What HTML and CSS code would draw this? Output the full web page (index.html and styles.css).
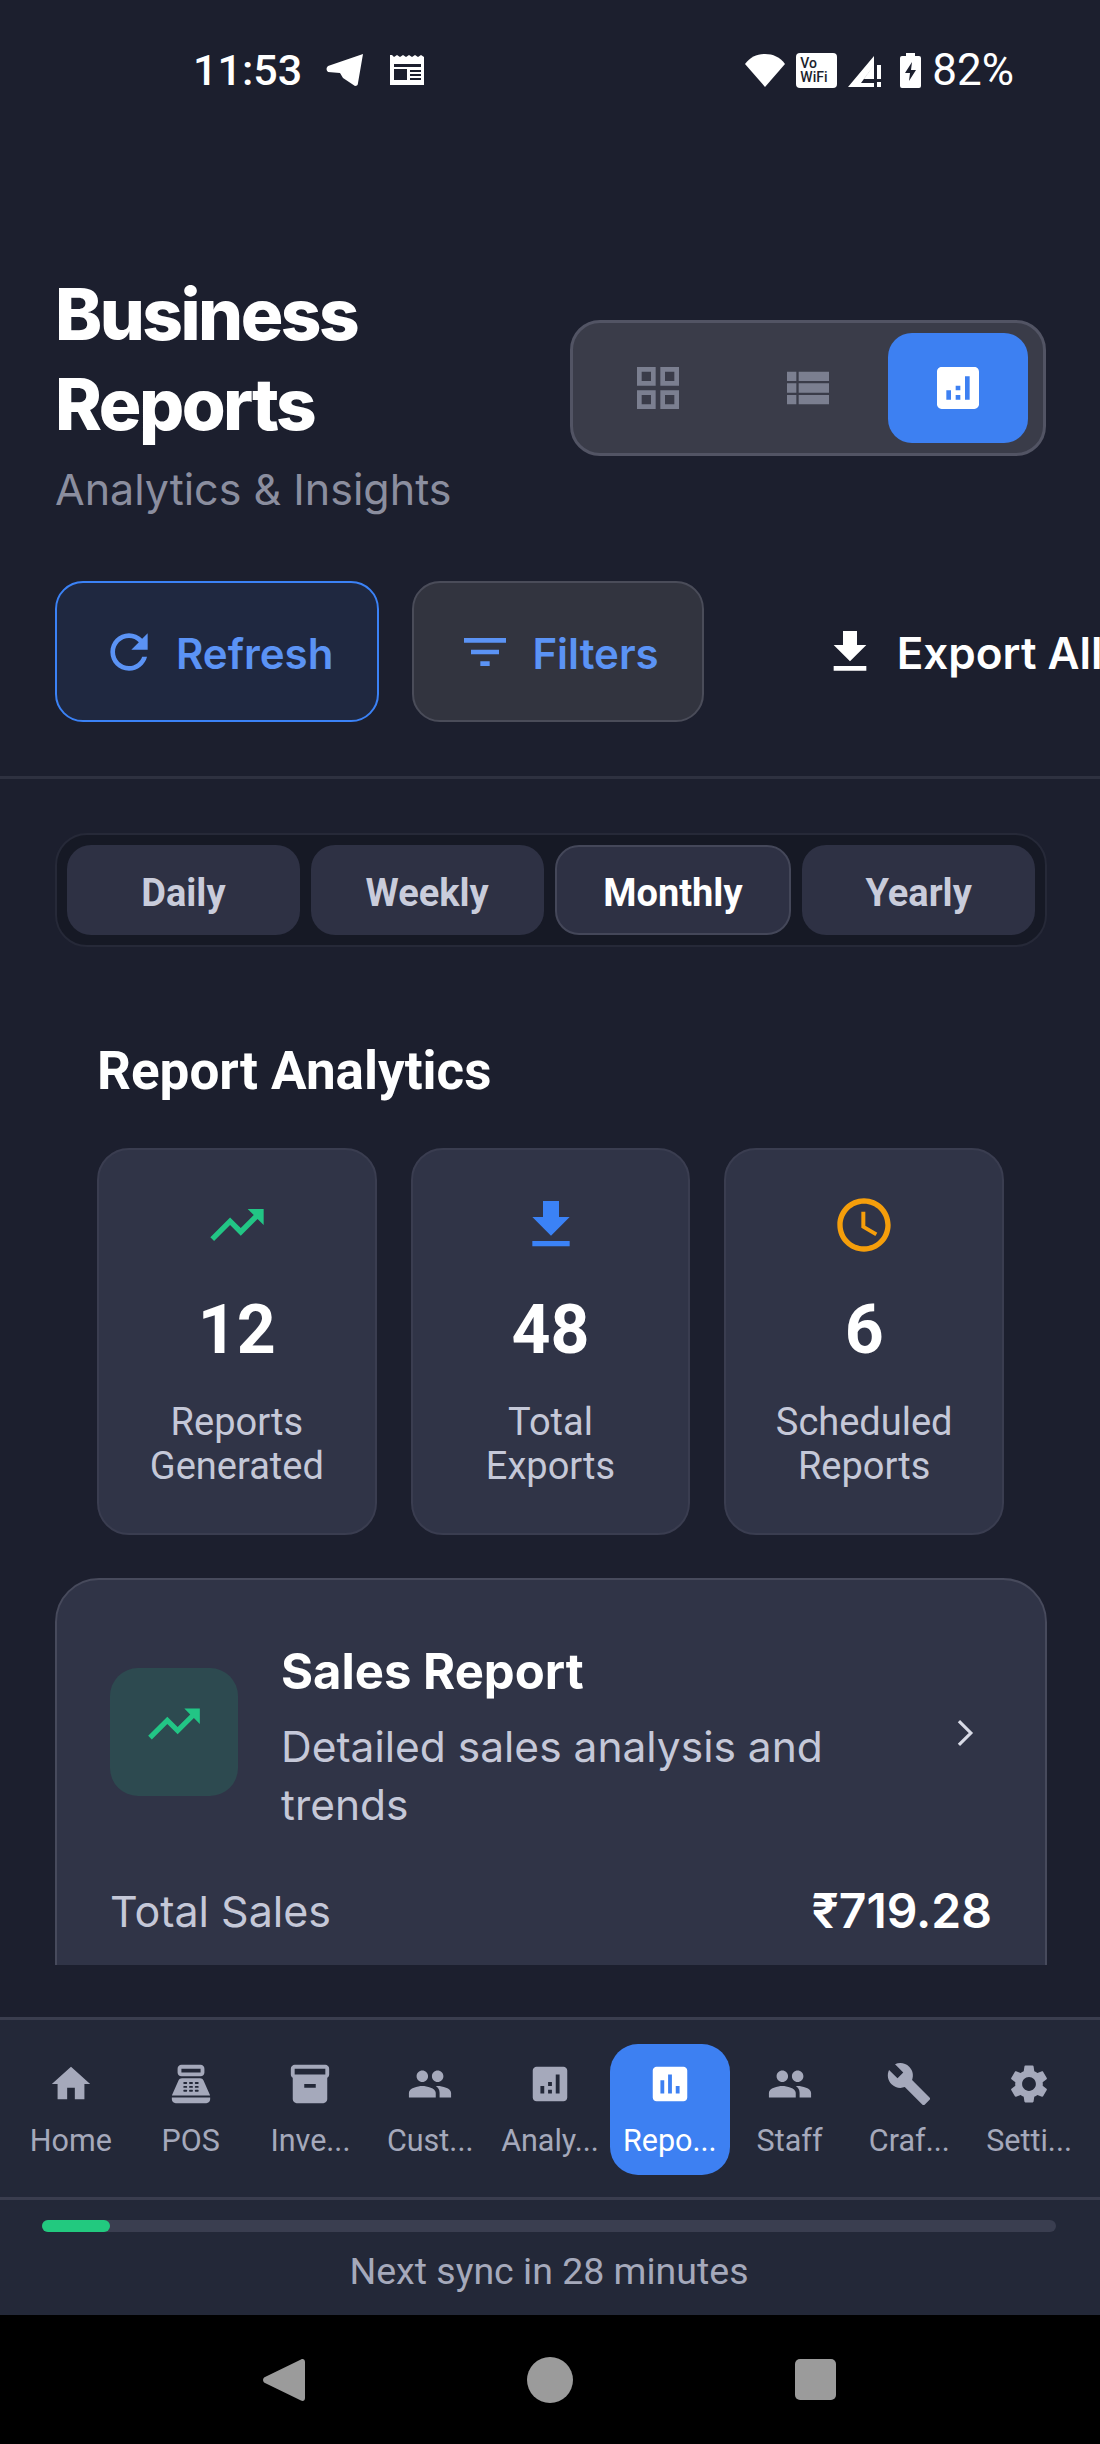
FILE: index.html
```html
<!DOCTYPE html>
<html lang="en">
<head>
    <meta charset="UTF-8">
    <meta name="viewport" content="width=device-width, initial-scale=1.0">
    <title>Business Reports</title>
    <link rel="stylesheet" href="styles.css">
</head>
<body>
    <div class="status-bar">
        <span class="clock">11:53</span>
        <svg class="st-telegram" viewBox="0 0 37 34"><path d="M37 1 2 13Q-1 16 2 19L14 20 17 25 29 33Q32 33 32 30Z" fill="#fff"/></svg>
        <svg class="st-news" viewBox="0 0 35 30"><path d="M0 0h2l2 2 3-2 3 2 3-2 3 2 3-2 3 2 3-2 3 2 3-2 3 2v28H0z" fill="#fff"/><path d="M4 9h27v3H4zM4 14h13v11H4z" fill="#1c1f2e"/><path d="M20 15h11v2H20zM20 19h11v2H20zM20 23h11v2H20z" fill="#1c1f2e"/></svg>
        <div class="status-right">
            <svg class="st-wifi" viewBox="0 0 40 33"><path d="M20 33 0 10C5 3 12 0 20 0s15 3 20 10z" fill="#fff"/></svg>
            <div class="st-vowifi"><span>Vo</span><span>WiFi</span></div>
            <svg class="st-signal" viewBox="0 0 34 33"><path d="M0 33 26 2v9L13 29h13v4z M26 11v14h-10z" fill="#fff"/><path d="M29 11h4v14h-4zM29 28h4v5h-4z" fill="#fff"/></svg>
            <svg class="st-battery" viewBox="0 0 21 35"><path d="M6 0h9v3h4a2 2 0 0 1 2 2v28a2 2 0 0 1-2 2H2a2 2 0 0 1-2-2V5a2 2 0 0 1 2-2h4z" fill="#fff"/><path d="M12 9 5 20h5l-1 8 7-11h-5z" fill="#1c1f2e"/></svg>
            <span class="battery-pct">82%</span>
        </div>
    </div>

    <div class="page">
        <div class="scroll-area">
            <div class="page-header">
                <div class="title-block">
                    <h1>Business Reports</h1>
                    <p>Analytics &amp; Insights</p>
                </div>
                <div class="view-toggle">
                    <div class="view-item">
                        <svg viewBox="0 0 24 24"><path d="M3 3v8h8V3H3zm6 6H5V5h4v4zm-6 4v8h8v-8H3zm6 6H5v-4h4v4zm4-16v8h8V3h-8zm6 6h-4V5h4v4zm-6 4v8h8v-8h-8zm6 6h-4v-4h4v4z"/></svg>
                    </div>
                    <div class="view-item">
                        <svg viewBox="0 0 24 24"><path d="M3 14h4v-4H3v4zm0 5h4v-4H3v4zM3 9h4V5H3v4zm5 5h13v-4H8v4zm0 5h13v-4H8v4zM8 5v4h13V5H8z"/></svg>
                    </div>
                    <div class="view-item active">
                        <svg viewBox="0 0 24 24"><path d="M19 3H5c-1.100 0-2 .9-2 2v14c0 1.100.9 2 2 2h14c1.100 0 2-.9 2-2V5c0-1.100-.9-2-2-2zM9 17H7v-4h2v4zm4 0h-2v-2h2v2zm0-4h-2v-2h2v2zm4 4h-2V7h2v10z"/></svg>
                    </div>
                </div>
            </div>

            <div class="actions">
                <button class="action-btn refresh">
                    <svg viewBox="0 0 24 24"><path d="M17.65 6.35C16.2 4.9 14.21 4 12 4c-4.42 0-7.99 3.58-7.99 8s3.57 8 7.99 8c3.73 0 6.84-2.55 7.73-6h-2.08c-.82 2.33-3.04 4-5.65 4-3.31 0-6-2.69-6-6s2.69-6 6-6c1.66 0 3.14.69 4.22 1.78L13 11h7V4l-2.35 2.35z"/></svg>
                    <span>Refresh</span>
                </button>
                <button class="action-btn filters">
                    <svg viewBox="0 0 24 24"><path d="M10 18h4v-2h-4v2zM3 6v2h18V6H3zm3 7h12v-2H6v2z"/></svg>
                    <span>Filters</span>
                </button>
                <button class="action-btn export">
                    <svg viewBox="0 0 24 24"><path d="M19 9h-4V3H9v6H5l7 7 7-7zM5 18v2h14v-2H5z"/></svg>
                    <span>Export All</span>
                </button>
            </div>

            <div class="period-tabs">
                <div class="period-tab">Daily</div>
                <div class="period-tab">Weekly</div>
                <div class="period-tab active">Monthly</div>
                <div class="period-tab">Yearly</div>
            </div>

            <section class="analytics">
                <h2>Report Analytics</h2>
                <div class="stat-row">
                    <div class="stat-card">
                        <svg class="green" viewBox="0 0 24 24"><path d="M16 6l2.29 2.29-4.88 4.88-4-4L2 16.59 3.41 18l6-6 4 4 6.3-6.29L22 12V6z"/></svg>
                        <div class="stat-num">12</div>
                        <div class="stat-label">Reports<br>Generated</div>
                    </div>
                    <div class="stat-card">
                        <svg class="blue" viewBox="0 0 24 24"><path d="M19 9h-4V3H9v6H5l7 7 7-7zM5 18v2h14v-2H5z"/></svg>
                        <div class="stat-num">48</div>
                        <div class="stat-label">Total<br>Exports</div>
                    </div>
                    <div class="stat-card">
                        <svg class="orange" viewBox="0 0 24 24"><path d="M11.99 2C6.47 2 2 6.48 2 12s4.47 10 9.99 10C17.52 22 22 17.52 22 12S17.52 2 11.99 2zM12 20c-4.42 0-8-3.58-8-8s3.58-8 8-8 8 3.58 8 8-3.58 8-8 8zm.5-13H11v6l5.25 3.15.75-1.23-4.5-2.67z"/></svg>
                        <div class="stat-num">6</div>
                        <div class="stat-label">Scheduled<br>Reports</div>
                    </div>
                </div>
            </section>

            <div class="report-card">
                <div class="report-head">
                    <div class="report-icon">
                        <svg viewBox="0 0 24 24"><path d="M16 6l2.29 2.29-4.88 4.88-4-4L2 16.59 3.41 18l6-6 4 4 6.3-6.29L22 12V6z"/></svg>
                    </div>
                    <div class="report-text">
                        <h3>Sales Report</h3>
                        <p>Detailed sales analysis and trends</p>
                    </div>
                    <svg class="chevron" viewBox="0 0 24 24"><path d="M9.3 6.7 14.6 12 9.3 17.3"/></svg>
                </div>
                <div class="report-total">
                    <span>Total Sales</span>
                    <strong>₹719.28</strong>
                </div>
            </div>
        </div>
    </div>

    <nav class="bottom-nav">
        <div class="nav-item">
            <svg viewBox="0 0 24 24"><path d="M10 20v-6h4v6h5v-8h3L12 3 2 12h3v8z"/></svg>
            <span>Home</span>
        </div>
        <div class="nav-item">
            <svg viewBox="0 0 24 24"><path d="M17 2H7c-1.1 0-2 .9-2 2v2c0 1.1.9 2 2 2h10c1.1 0 2-.9 2-2V4c0-1.100-.9-2-2-2zm0 4H7V4h10v2zm3 16H4c-1.100 0-2-.9-2-2v-1h20v1c0 1.100-.9 2-2 2zm-1.470-11.810C18.210 9.470 17.490 9 16.700 9H7.300c-.79 0-1.510.47-1.830 1.190L2 18h20l-3.470-7.810zM9.500 16h-1c-.28 0-.5-.22-.5-.5s.22-.5.5-.5h1c.28 0 .5.22.5.5s-.22.5-.5.5zm0-2h-1c-.28 0-.5-.22-.5-.5s.22-.5.5-.5h1c.28 0 .5.22.5.5s-.22.5-.5.5zm0-2h-1c-.28 0-.5-.22-.5-.5s.22-.5.5-.5h1c.28 0 .5.22.5.5s-.22.5-.5.5zm3 4h-1c-.28 0-.5-.22-.5-.5s.22-.5.5-.5h1c.28 0 .5.22.5.5s-.22.5-.5.5zm0-2h-1c-.28 0-.5-.22-.5-.5s.22-.5.5-.5h1c.28 0 .5.22.5.5s-.22.5-.5.5zm0-2h-1c-.28 0-.5-.22-.5-.5s.22-.5.5-.5h1c.28 0 .5.22.5.5s-.22.5-.5.5zm3 4h-1c-.28 0-.5-.22-.5-.5s.22-.5.5-.5h1c.28 0 .5.22.5.5s-.22.5-.5.5zm0-2h-1c-.28 0-.5-.22-.5-.5s.22-.5.5-.5h1c.28 0 .5.22.5.5s-.22.5-.5.5zm0-2h-1c-.28 0-.5-.22-.5-.5s.22-.5.5-.5h1c.28 0 .5.22.5.5s-.22.5-.5.5z"/></svg>
            <span>POS</span>
        </div>
        <div class="nav-item">
            <svg viewBox="0 0 24 24"><path d="M20 2H4c-1 0-2 .9-2 2v3.010c0 .72.43 1.340 1 1.690V20c0 1.100 1.100 2 2 2h14c.9 0 2-.9 2-2V8.700c.57-.35 1-.97 1-1.690V4c0-1.100-1-2-2-2zm-5 12H9v-2h6v2zm5-7H4V4l16-.02V7z"/></svg>
            <span>Inve...</span>
        </div>
        <div class="nav-item">
            <svg viewBox="0 0 24 24"><path d="M16 11c1.660 0 2.990-1.340 2.990-3S17.660 5 16 5c-1.660 0-3 1.340-3 3s1.340 3 3 3zm-8 0c1.660 0 2.990-1.340 2.990-3S9.660 5 8 5C6.340 5 5 6.340 5 8s1.340 3 3 3zm0 2c-2.330 0-7 1.170-7 3.500V19h14v-2.500c0-2.330-4.670-3.500-7-3.500zm8 0c-.29 0-.62.02-.97.05 1.160.84 1.970 1.970 1.970 3.450V19h6v-2.500c0-2.330-4.670-3.500-7-3.500z"/></svg>
            <span>Cust...</span>
        </div>
        <div class="nav-item">
            <svg viewBox="0 0 24 24"><path d="M19 3H5c-1.100 0-2 .9-2 2v14c0 1.100.9 2 2 2h14c1.100 0 2-.9 2-2V5c0-1.100-.9-2-2-2zM9 17H7v-4h2v4zm4 0h-2v-2h2v2zm0-4h-2v-2h2v2zm4 4h-2V7h2v10z"/></svg>
            <span>Analy...</span>
        </div>
        <div class="nav-item active">
            <svg viewBox="0 0 24 24"><path d="M19 3H5c-1.100 0-2 .9-2 2v14c0 1.100.9 2 2 2h14c1.100 0 2-.9 2-2V5c0-1.100-.9-2-2-2zM9 17H7v-7h2v7zm4 0h-2V7h2v10zm4 0h-2v-4h2v4z"/></svg>
            <span>Repo...</span>
        </div>
        <div class="nav-item">
            <svg viewBox="0 0 24 24"><path d="M16 11c1.660 0 2.990-1.340 2.990-3S17.660 5 16 5c-1.660 0-3 1.340-3 3s1.340 3 3 3zm-8 0c1.660 0 2.990-1.340 2.990-3S9.660 5 8 5C6.340 5 5 6.340 5 8s1.340 3 3 3zm0 2c-2.330 0-7 1.170-7 3.500V19h14v-2.500c0-2.330-4.670-3.500-7-3.500zm8 0c-.29 0-.62.02-.97.05 1.160.84 1.970 1.970 1.970 3.450V19h6v-2.500c0-2.330-4.670-3.500-7-3.500z"/></svg>
            <span>Staff</span>
        </div>
        <div class="nav-item">
            <svg viewBox="0 0 24 24"><path d="M22.700 19l-9.100-9.100c.9-2.300.4-5-1.500-6.900-2-2-5-2.400-7.400-1.300L9 6 6 9 1.600 4.700C.4 7.100.9 10.100 2.900 12.100c1.900 1.900 4.600 2.400 6.900 1.500l9.100 9.100c.4.4 1 .4 1.400 0l2.300-2.300c.5-.4.5-1.100.1-1.400z"/></svg>
            <span>Craf...</span>
        </div>
        <div class="nav-item">
            <svg viewBox="0 0 24 24"><path d="M19.140 12.940c.04-.3.06-.61.06-.94 0-.32-.02-.64-.07-.94l2.030-1.580c.18-.14.23-.41.12-.61l-1.920-3.320c-.12-.22-.37-.29-.59-.22l-2.390.96c-.5-.38-1.030-.7-1.620-.94l-.36-2.540c-.04-.24-.24-.41-.48-.41h-3.840c-.24 0-.43.17-.47.41l-.36 2.540c-.59.24-1.130.57-1.620.94l-2.390-.96c-.22-.08-.47 0-.59.22L2.740 8.870c-.12.21-.08.47.12.61l2.030 1.580c-.05.3-.09.63-.09.94s.02.64.07.94l-2.030 1.580c-.18.14-.23.41-.12.61l1.920 3.320c.12.22.37.29.59.22l2.390-.96c.5.38 1.030.7 1.620.94l.36 2.540c.05.24.24.41.48.41h3.840c.24 0 .44-.17.47-.41l.36-2.540c.59-.24 1.130-.56 1.620-.94l2.390.96c.22.08.47 0 .59-.22l1.920-3.320c.12-.22.07-.47-.12-.61l-2.010-1.580zM12 15.600c-1.980 0-3.600-1.620-3.600-3.600s1.620-3.600 3.600-3.600 3.600 1.620 3.600 3.600-1.620 3.600-3.600 3.600z"/></svg>
            <span>Setti...</span>
        </div>
    </nav>

    <div class="sync-bar">
        <div class="sync-track"><div class="sync-fill" style="width: 68px"></div></div>
        <div class="sync-text">Next sync in 28 minutes</div>
    </div>

    <div class="system-nav">
        <svg class="sys-back" viewBox="0 0 42 44"><path d="M38 1.500c2-1 4 0 4 2.500v36c0 2.500-2 3.500-4 2.500L2 25c-2.600-1.400-2.600-4.600 0-6z" fill="#9b9b9b"/></svg>
        <div class="sys-home"></div>
        <div class="sys-square"></div>
    </div>
</body>
</html>
```

FILE: styles.css
```css
* {
    box-sizing: border-box;
}
html, body {
    margin: 0;
    padding: 0;
}
body {
    width: 1100px;
    height: 2444px;
    overflow: hidden;
    display: flex;
    flex-direction: column;
    background-color: #1c1f2e;
    color: #fff;
    font-family: Inter, "Noto Sans", sans-serif;
}

/* status bar */
.status-bar {
    height: 140px;
    flex-shrink: 0;
    display: flex;
    align-items: center;
    padding: 0 86px 0 193px;
    font-family: Roboto, sans-serif;
    font-size: 43px;
}
.clock {
    font-weight: 500;
}
.st-telegram {
    width: 37px;
    height: 34px;
    margin-left: 24px;
}
.st-news {
    width: 35px;
    height: 30px;
    margin-left: 27px;
}
.status-right {
    margin-left: auto;
    display: flex;
    align-items: center;
}
.st-wifi {
    width: 40px;
    height: 33px;
}
.st-vowifi {
    width: 41px;
    height: 35px;
    margin-left: 11px;
    border-radius: 4px;
    background-color: #fff;
    color: #1c1f2e;
    font-size: 14px;
    font-weight: 500;
    line-height: 14px;
    padding: 3px 0 0 4px;
    display: flex;
    flex-direction: column;
}
.st-signal {
    width: 34px;
    height: 33px;
    margin-left: 11px;
}
.st-battery {
    width: 21px;
    height: 35px;
    margin-left: 18px;
}
.battery-pct {
    margin-left: 11px;
    font-size: 44px;
}

/* main content */
.page {
    flex: 1;
    min-height: 0;
    padding-bottom: 52px;
    display: flex;
}
.scroll-area {
    flex: 1;
    overflow: hidden;
}
.page-header {
    display: flex;
    justify-content: space-between;
    align-items: flex-start;
    padding: 129px 54px 0 55px;
}
.title-block h1 {
    margin: 0;
    width: 400px;
    font-size: 71px;
    line-height: 90px;
    font-weight: 800;
    letter-spacing: -2.5px;
}
.title-block p {
    margin: 15px 0 0;
    font-size: 43px;
    line-height: 50px;
    color: #8b8e9f;
}
.view-toggle {
    margin-top: 51px;
    width: 476px;
    height: 136px;
    padding: 10px 15px;
    display: flex;
    gap: 10px;
    background-color: #3a3c49;
    border: 3px solid #525464;
    border-radius: 30px;
}
.view-item {
    flex: 1;
    display: flex;
    align-items: center;
    justify-content: center;
    border-radius: 24px;
}
.view-item svg {
    width: 56px;
    height: 56px;
    fill: #7b7f90;
}
.view-item.active {
    background-color: #3d80f2;
}
.view-item.active svg {
    fill: #fff;
}

.actions {
    display: flex;
    gap: 33px;
    margin-top: 67px;
    padding: 0 0 54px 55px;
    border-bottom: 3px solid #2e3140;
    overflow: hidden;
}
.action-btn {
    height: 141px;
    flex-shrink: 0;
    display: flex;
    align-items: center;
    gap: 19px;
    padding: 0 43px;
    border: 2px solid #4a4c59;
    border-radius: 28px;
    background-color: #32343f;
    color: #5b93f5;
    font-family: Inter, sans-serif;
    font-size: 42px;
    font-weight: 600;
    white-space: nowrap;
}
.action-btn span {
    padding-top: 3px;
}
.action-btn svg {
    width: 56px;
    height: 56px;
    fill: currentColor;
}
.action-btn.refresh {
    background-color: #1f2840;
    border-color: #3b82f6;
    padding: 0 44px;
}
.action-btn.export {
    background: none;
    border-color: transparent;
    color: #fff;
    margin-left: 40px;
    font-size: 44px;
}

.period-tabs {
    display: flex;
    gap: 11px;
    height: 114px;
    margin: 54px 53px 0 55px;
    padding: 10px 10px;
    background-color: #161925;
    border: 2px solid #262938;
    border-radius: 32px;
}
.period-tab {
    flex: 1 1 0;
    min-width: 0;
    padding-top: 5px;
    display: flex;
    align-items: center;
    justify-content: center;
    background-color: #2e3144;
    border-radius: 24px;
    color: #c9ccdb;
    font-family: Roboto, sans-serif;
    font-size: 38px;
    font-weight: 700;
}
.period-tab.active {
    color: #fff;
    border: 2px solid #444759;
}

.analytics {
    padding: 94px 96px 0 97px;
}
.analytics h2 {
    margin: 0;
    font-family: Roboto, sans-serif;
    font-size: 53px;
    line-height: 60px;
    font-weight: 700;
}
.stat-row {
    display: flex;
    gap: 34px;
    margin-top: 47px;
}
.stat-card {
    flex: 1;
    height: 387px;
    padding-top: 43px;
    display: flex;
    flex-direction: column;
    align-items: center;
    background-color: #303447;
    border: 2px solid #3a3d50;
    border-radius: 32px;
    font-family: Roboto, sans-serif;
}
.stat-card svg {
    width: 64px;
    height: 64px;
}
.green {
    fill: #22c585;
}
.blue {
    fill: #3b82f6;
}
.orange {
    fill: #f59e0b;
}
.stat-num {
    margin-top: 37px;
    font-size: 68px;
    line-height: 72px;
    font-weight: 700;
}
.stat-label {
    margin-top: 34px;
    font-size: 38px;
    line-height: 44px;
    text-align: center;
    color: #c5c8d8;
}

.report-card {
    margin: 43px 53px 0 55px;
    height: 600px;
    padding: 62px 53px 0;
    background-color: #303447;
    border: 2px solid #474a5c;
    border-radius: 44px;
}
.report-head {
    display: flex;
    align-items: flex-start;
}
.report-icon {
    width: 128px;
    height: 128px;
    margin-top: 26px;
    flex-shrink: 0;
    display: flex;
    align-items: center;
    justify-content: center;
    background-color: #2d4a50;
    border-radius: 28px;
}
.report-icon svg {
    width: 62px;
    height: 62px;
    margin-bottom: 16px;
    fill: #22c585;
}
.report-text {
    flex: 1;
    padding: 0 40px 0 43px;
}
.report-text h3 {
    margin: 0;
    font-size: 49px;
    line-height: 60px;
    font-weight: 700;
}
.report-text p {
    margin: 16px 0 0;
    font-size: 42.5px;
    line-height: 58px;
    color: #c5c8d8;
}
.chevron {
    width: 54px;
    height: 54px;
    margin-top: 64px;
    flex-shrink: 0;
    fill: none;
    stroke: #d8dae6;
    stroke-width: 1.4;
}
.report-total {
    display: flex;
    justify-content: space-between;
    align-items: center;
    margin-top: 50px;
    line-height: 54px;
    font-size: 43px;
    color: #c5c8d8;
}
.report-total strong {
    color: #fff;
    font-size: 48px;
    font-weight: 600;
}

/* bottom nav */
.bottom-nav {
    height: 180px;
    flex-shrink: 0;
    display: grid;
    grid-template-columns: repeat(9, 1fr);
    padding: 24px 11px 0;
    background-color: #232838;
    border-top: 3px solid #3a3d4e;
    font-family: Roboto, sans-serif;
}
.nav-item {
    height: 131px;
    padding-top: 17px;
    display: flex;
    flex-direction: column;
    align-items: center;
    border-radius: 28px;
    color: #a5a9bb;
    font-size: 30.5px;
    white-space: nowrap;
}
.nav-item svg {
    width: 46px;
    height: 46px;
    flex-shrink: 0;
    fill: currentColor;
}
.nav-item span {
    margin-top: 13px;
    line-height: 42px;
}
.nav-item.active {
    background-color: #3d80f2;
    color: #fff;
}

.sync-bar {
    height: 118px;
    flex-shrink: 0;
    padding: 20px 44px 0 42px;
    background-color: #232838;
    border-top: 3px solid #3a3d4e;
}
.sync-track {
    height: 12px;
    background-color: #3a3e50;
    border-radius: 6px;
}
.sync-fill {
    height: 12px;
    background-color: #22c97f;
    border-radius: 6px;
}
.sync-text {
    margin-top: 17px;
    font-family: Roboto, sans-serif;
    font-size: 37.5px;
    line-height: 44px;
    text-align: center;
    color: #a5a9bb;
}

/* android buttons */
.system-nav {
    height: 129px;
    flex-shrink: 0;
    display: flex;
    align-items: center;
    background-color: #000;
    padding-left: 263px;
}
.sys-back {
    width: 42px;
    height: 44px;
}
.sys-home {
    width: 46px;
    height: 46px;
    margin-left: 222px;
    border-radius: 50%;
    background-color: #9b9b9b;
}
.sys-square {
    width: 41px;
    height: 41px;
    margin-left: 222px;
    border-radius: 5px;
    background-color: #9b9b9b;
}
```
